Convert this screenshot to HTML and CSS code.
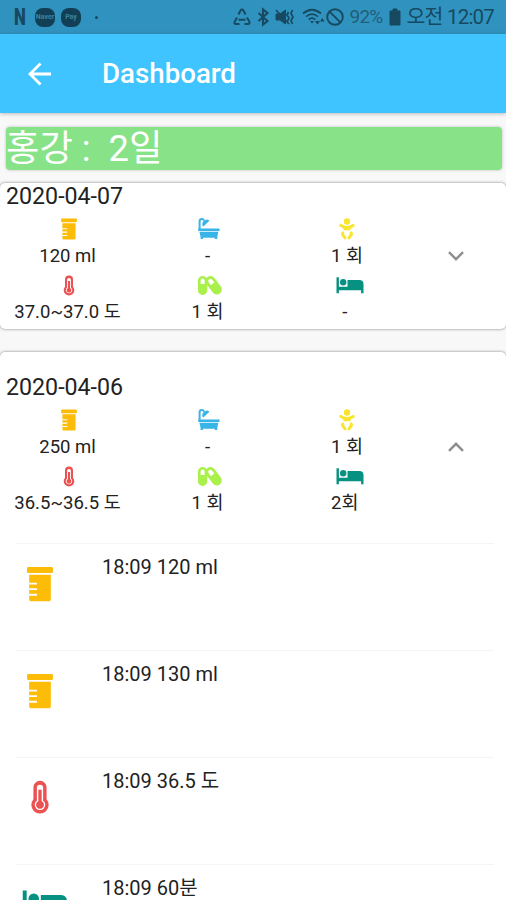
FILE: index.html
```html
<!DOCTYPE html>
<html lang="ko">
<head>
  <meta charset="UTF-8" />
  <meta name="viewport" content="width=device-width, initial-scale=1.0"/>
  <title>Dashboard</title>
  <link rel="stylesheet" href="styles.css">
</head>
<body>

  <!-- icons -->
  <svg class="sprite" width="0" height="0">
    <symbol id="bottle" viewBox="0 0 28 24">
      <path d="M7 1.6h14q.9 0 .9.9v2q0 .8-.9.8H7q-.9 0-.9-.8v-2q0-.9.9-.9z"/>
      <path d="M7.4 6.300h13.200v15.100q0 1.100-1.100 1.100H8.500q-1.100 0-1.100-1.100v-2.300h4.800v-1.100H7.400v-2.300h4.800v-1.100H7.400v-2.300h4.800v-1.100H7.400z"/>
    </symbol>
    <symbol id="thermo" viewBox="0 0 28 24">
      <path fill-rule="evenodd" d="M14 1.500a4 4 0 0 1 4 4v7.200a5.300 5.300 0 1 1-8 0V5.500a4 4 0 0 1 4-4zm0 2.400a1.900 1.900 0 0 0-1.900 1.900v7.800a3.200 3.200 0 1 0 3.800 0V5.800A1.900 1.900 0 0 0 14 3.900z"/>
      <path d="M13 7h2v7a2.400 2.400 0 1 1-2 0z"/>
    </symbol>
    <symbol id="bath" viewBox="0 0 28 24">
      <path d="M5.600 12V4.200Q5.600 2 7.800 2q1.700 0 2.300 1.700" fill="none" stroke="currentColor" stroke-width="2"/>
      <path d="M8.400 8.500Q7.500 3.600 13.200 2.600l2.400.9-6.200 6z"/>
      <path d="M4.200 11.400h21.300v2.500H4.200zM5.400 14.800h18.900l-1 5.200v2h-2.500v-1.300H9V22H6.600v-2z"/>
    </symbol>
    <symbol id="pills" viewBox="0 0 28 24">
      <path fill-rule="evenodd" d="M8.600 2a4.700 4.700 0 0 1 4.700 4.700v9.600a4.700 4.700 0 0 1-9.400 0V6.700A4.700 4.700 0 0 1 8.600 2zm0 2.600A2 2 0 0 0 6.600 6.600V10h4V6.600a2 2 0 0 0-2-2z"/>
      <path fill-rule="evenodd" transform="rotate(-37 19.800 11.500)" d="M19.800 .9a5 5 0 0 1 5 5v10.600a5 5 0 0 1-10 0V5.900a5 5 0 0 1 5-5zm0 2.800A2.200 2.200 0 0 0 17.600 5.900v3.600h4.400V5.900A2.200 2.200 0 0 0 19.800 3.700z"/>
    </symbol>
    <symbol id="baby" viewBox="0 0 28 24">
      <circle cx="14" cy="4.500" r="3.200"/>
      <path d="M7.800 8.400q6.200 4 12.400 0" fill="none" stroke="currentColor" stroke-width="3" stroke-linecap="round"/>
      <path d="M9.800 9h8.400l-.8 4.300h-6.800z"/>
      <path d="M9.800 16l-.3 1.300 2.500 3.500M18.200 16l.3 1.300-2.500 3.500" fill="none" stroke="currentColor" stroke-width="3" stroke-linecap="round" stroke-linejoin="round"/>
    </symbol>
    <symbol id="bed" viewBox="0 0 28 24">
      <path d="M3.500 3.200h2.400v9.600h8.600V5.900h11.800q4.200 0 4.200 4.200v9.200h-2.400v-3.100H5.900v3.100H3.500z"/>
      <circle cx="10.200" cy="8.200" r="3.200"/>
    </symbol>
  </svg>

  <div class="status-bar">
    <div class="status-left">
      <span class="netflix">N</span>
      <span class="badge">Naver</span>
      <span class="badge">Pay</span>
      <span class="dot"></span>
    </div>
    <div class="status-right">
      <svg class="s-recycle" viewBox="0 0 18 18"><path d="M5.500 6.500L7.500 2.500q1.500-2 3 0l2 4M4 9.500L1.500 14q-.5 2 1.500 2h3.500M14 9.500l2.500 4.500q.5 2-1.500 2h-3.500M5.500 11.800h7" stroke-width="2"/></svg>
      <svg class="s-bt" viewBox="0 0 12 18"><path d="M1.500 5l9 8L6 16.500v-15L10.500 5l-9 8" stroke-width="2.100"/></svg>
      <svg class="s-mute" viewBox="0 0 20 18"><path d="M1 6h4l5.500-4v14L5 12H1z" fill="currentColor"/><path d="M1 2l13 14M13.500 4l-1.500 3 2 3-1.500 3M17.500 2l-1.500 3.500 2 3.500-2 3.500 1.500 3.500" stroke-width="1.700"/></svg>
      <svg class="s-wifi" viewBox="0 0 23 18"><path d="M1 5.500q9-7.500 18 0M4 8.700q6-5 12 0M6.700 11.500q3.300-2.600 6.600 0" stroke-width="1.700"/><path d="M8 13h4l-2 2.500zM13 13h5l-2.500 3.500zM18 13.500l2.300-3.500 2.300 3.500z" fill="currentColor" stroke="none"/></svg>
      <svg class="s-block" viewBox="0 0 18 18"><circle cx="9" cy="9" r="7.800" stroke-width="1.900"/><path d="M3.800 3.800l10.400 10.400" stroke-width="1.900"/></svg>
      <span class="percent">92%</span>
      <svg class="s-battery" viewBox="0 0 12 18"><path d="M4 1h4v2h3v14H1V3h3z" fill="currentColor" stroke-width="1"/></svg>
      <span class="clock">오전 12:07</span>
    </div>
  </div>

  <div class="app-bar">
    <svg class="back" viewBox="0 0 24 24"><path d="M23 12H2M12.500 1.500L2 12l10.500 10.500"/></svg>
    <div class="title">Dashboard</div>
  </div>

  <div class="name-bar">홍강 :&nbsp; 2일</div>

  <div class="card">
    <div class="summary">
      <div class="info">
        <div class="date">2020-04-07</div>
        <div class="stats">
          <div class="stat"><svg class="icon amber"><use href="#bottle"/></svg><span>120 ml</span></div>
          <div class="stat"><svg class="icon blue"><use href="#bath"/></svg><span>-</span></div>
          <div class="stat"><svg class="icon yellow"><use href="#baby"/></svg><span>1 회</span></div>
          <div class="stat"><svg class="icon red"><use href="#thermo"/></svg><span>37.0~37.0 도</span></div>
          <div class="stat"><svg class="icon lime"><use href="#pills"/></svg><span>1 회</span></div>
          <div class="stat"><svg class="icon teal"><use href="#bed"/></svg><span>-&nbsp;</span></div>
        </div>
      </div>
      <svg class="chevron" viewBox="0 0 16 10"><path d="M1 1.200l7 7 7-7"/></svg>
    </div>
  </div>

  <div class="card open">
    <div class="summary">
      <div class="info">
        <div class="date">2020-04-06</div>
        <div class="stats">
          <div class="stat"><svg class="icon amber"><use href="#bottle"/></svg><span>250 ml</span></div>
          <div class="stat"><svg class="icon blue"><use href="#bath"/></svg><span>-</span></div>
          <div class="stat"><svg class="icon yellow"><use href="#baby"/></svg><span>1 회</span></div>
          <div class="stat"><svg class="icon red"><use href="#thermo"/></svg><span>36.5~36.5 도</span></div>
          <div class="stat"><svg class="icon lime"><use href="#pills"/></svg><span>1 회</span></div>
          <div class="stat"><svg class="icon teal"><use href="#bed"/></svg><span>2회&nbsp;</span></div>
        </div>
      </div>
      <svg class="chevron" viewBox="0 0 16 10"><path d="M1 8.800l7-7 7 7"/></svg>
    </div>

    <div class="records">
      <div class="record"><svg class="icon amber"><use href="#bottle"/></svg><span>18:09 120 ml</span></div>
      <div class="record"><svg class="icon amber"><use href="#bottle"/></svg><span>18:09 130 ml</span></div>
      <div class="record"><svg class="icon red"><use href="#thermo"/></svg><span>18:09 36.5 도</span></div>
      <div class="record"><svg class="icon teal"><use href="#bed"/></svg><span>18:09 60분</span></div>
    </div>
  </div>

</body>
</html>
```
FILE: styles.css
```css
html, body {
  margin: 0;
  padding: 0;
  height: 100%;
  background: #f8f8f8;
  font-family: Roboto, "Noto Sans CJK KR", sans-serif;
  overflow: hidden;
  color: #222;
}

body {
  display: flex;
  flex-direction: column;
}

svg {
  display: block;
  flex: none;
  overflow: visible;
}

.sprite {
  position: absolute;
}

/* status bar */
.status-bar {
  display: flex;
  flex: none;
  justify-content: space-between;
  align-items: center;
  height: 34px;
  padding: 0 12px 0 14px;
  box-sizing: border-box;
  background: #3093bf;
  color: #174961;
}

.status-left, .status-right {
  display: flex;
  align-items: center;
}

.status-left {
  gap: 6px;
}

.netflix {
  width: 13px;
  margin-right: 2px;
  font-size: 24px;
  font-weight: 900;
  line-height: 34px;
  transform: scaleX(0.7);
  transform-origin: left;
}

.badge {
  width: 20px;
  height: 19px;
  border-radius: 8px;
  background: #123f55;
  color: #3a83a3;
  font-size: 7px;
  font-weight: bold;
  line-height: 19px;
  text-align: center;
}

.dot {
  width: 3px;
  height: 3px;
  margin-left: 8px;
  border-radius: 50%;
  background: #174961;
}

.status-right svg {
  height: 18px;
  fill: none;
  stroke: currentColor;
}

.s-recycle { width: 18px; margin-right: 6px; }
.s-bt { width: 12px; margin-right: 6px; }
.s-mute { width: 20px; margin-right: 7px; }
.s-wifi { width: 23px; margin-right: 1px; }
.s-block { width: 18px; margin-right: 6px; }
.s-battery { width: 12px; margin-right: 6px; }

.percent {
  width: 39px;
  font-size: 19px;
  line-height: 36px;
  letter-spacing: -0.8px;
  color: #235d78;
}

.clock {
  font-size: 20.5px;
  line-height: 37px;
  letter-spacing: -0.8px;
  white-space: nowrap;
}

/* app bar */
.app-bar {
  display: flex;
  flex: none;
  align-items: center;
  height: 79px;
  padding-left: 28px;
  background: #40c4ff;
  color: white;
  box-shadow: 0 1px 4px rgba(0, 0, 0, 0.25);
}

.back {
  width: 24px;
  height: 24px;
  fill: none;
  stroke: white;
  stroke-width: 2.8;
}

.title {
  margin-left: 50px;
  font-size: 27.7px;
  font-weight: 500;
}

.name-bar {
  flex: none;
  height: 43px;
  margin: 14px 4px 13px 6px;
  border-radius: 4px;
  background: #88e388;
  color: white;
  font-size: 36.3px;
  line-height: 43px;
  box-shadow: 0 0 3px rgba(0, 0, 0, 0.25);
}

/* day cards */
.card {
  flex: none;
  height: 146px;
  margin-bottom: 23px;
  border-radius: 5px;
  background: white;
  box-shadow: 0 0 3px rgba(0, 0, 0, 0.5);
}

.card.open {
  flex: 1;
  min-height: 0;
  margin-bottom: 0;
  padding-top: 22px;
  border-radius: 5px 5px 0 0;
  overflow: hidden;
}

.summary {
  display: flex;
  align-items: center;
  height: 146px;
}

.info {
  width: 417px;
  height: 146px;
}

.date {
  height: 32px;
  padding-left: 6px;
  font-size: 23.2px;
  line-height: 27px;
}

.stats {
  display: grid;
  grid-template-columns: repeat(3, 139px);
  grid-auto-rows: 56px;
}

.stat {
  display: flex;
  flex-direction: column;
  align-items: center;
  padding-top: 2px;
  font-size: 18.5px;
  line-height: 30px;
}

.stat:nth-child(n+4) {
  padding-top: 3px;
  line-height: 28px;
}

.stat span {
  margin-right: 4px;
}

.stat:nth-child(3n+2) span {
  margin-right: 2px;
}

.stat:nth-child(3n) span {
  margin-right: 1px;
}

.icon {
  width: 28px;
  height: 24px;
  fill: currentColor;
}

.stat .icon {
  margin-right: 2px;
}

symbol {
  overflow: visible;
}

.amber { color: #fcbc08; }
.blue { color: #38b4e6; }
.yellow { color: #f7e52e; }
.red { color: #ec5252; }
.lime { color: #a9f04a; }
.teal { color: #079180; }

.chevron {
  width: 16px;
  height: 10px;
  margin-left: 31px;
  fill: none;
  stroke: #8e8e8e;
  stroke-width: 2.4;
}

/* records of the opened day */
.records {
  margin: 23px 12px 0 16px;
}

.record {
  display: flex;
  height: 106px;
  border-top: 1px solid #f4f4f4;
  font-size: 20px;
  line-height: 24px;
}

.record .icon {
  width: 46px;
  height: 40px;
  margin: 20px 39px 0 1px;
}

.record span {
  padding-top: 11px;
}
```
